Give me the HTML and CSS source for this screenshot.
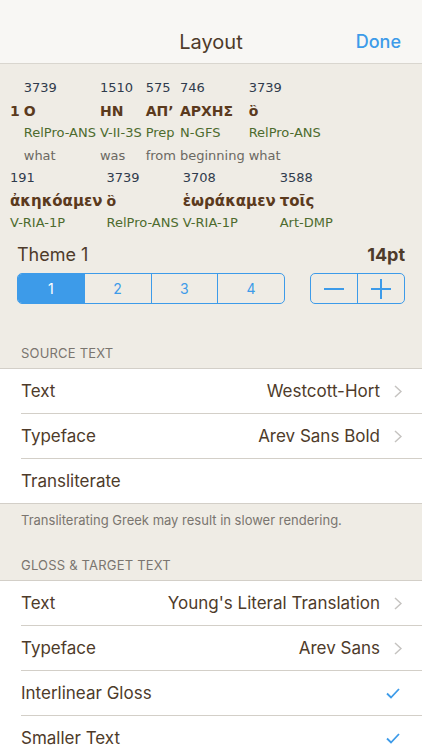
FILE: index.html
```html
<!DOCTYPE html>
<html>
<head>
<meta charset="utf-8">
<link rel="stylesheet" href="styles.css">
</head>
<body>
<div class="nav">
  <span class="nav-title">Layout</span>
  <span class="nav-done">Done</span>
</div>

<div class="preview">
  <div class="verse">
    <div class="word vnum"><span class="num">&nbsp;</span><span class="gk">1</span></div>
    <div class="word"><span class="num">3739</span><span class="gk">O</span><span class="morph">RelPro-ANS</span><span class="gloss">what</span></div>
    <div class="word"><span class="num">1510</span><span class="gk">HN</span><span class="morph">V-II-3S</span><span class="gloss">was</span></div>
    <div class="word"><span class="num">575</span><span class="gk">ΑΠ’</span><span class="morph">Prep</span><span class="gloss">from</span></div>
    <div class="word"><span class="num">746</span><span class="gk">ΑΡΧΗΣ</span><span class="morph">N-GFS</span><span class="gloss">beginning</span></div>
    <div class="word"><span class="num">3739</span><span class="gk">ὃ</span><span class="morph">RelPro-ANS</span><span class="gloss">what</span></div>
  </div>
  <div class="verse">
    <div class="word"><span class="num">191</span><span class="gk lc">ἀκηκόαμεν</span><span class="morph">V-RIA-1P</span></div>
    <div class="word"><span class="num">3739</span><span class="gk">ὃ</span><span class="morph">RelPro-ANS</span></div>
    <div class="word"><span class="num">3708</span><span class="gk lc">ἑωράκαμεν</span><span class="morph">V-RIA-1P</span></div>
    <div class="word"><span class="num">3588</span><span class="gk lc">τοῖς</span><span class="morph">Art-DMP</span></div>
  </div>
</div>

<div class="theme">
  <div class="theme-head">
    <span class="theme-name">Theme 1</span>
    <span class="theme-size">14pt</span>
  </div>
  <div class="theme-controls">
    <div class="segmented">
      <div class="seg active">1</div>
      <div class="seg">2</div>
      <div class="seg">3</div>
      <div class="seg">4</div>
    </div>
    <div class="stepper">
      <div class="step"><span class="minus"></span></div>
      <div class="step"><span class="plus"></span></div>
    </div>
  </div>
</div>

<div class="section-header">SOURCE TEXT</div>
<div class="group">
  <div class="cell">
    <span class="cell-label">Text</span>
    <span class="cell-value">Westcott-Hort</span>
    <svg class="chev" viewBox="0 0 8 13" width="8" height="13"><path d="M1 1l6 5.5L1 12" fill="none" stroke="#c5c3c0" stroke-width="1.5"/></svg>
  </div>
  <div class="cell">
    <span class="cell-label">Typeface</span>
    <span class="cell-value">Arev Sans Bold</span>
    <svg class="chev" viewBox="0 0 8 13" width="8" height="13"><path d="M1 1l6 5.5L1 12" fill="none" stroke="#c5c3c0" stroke-width="1.5"/></svg>
  </div>
  <div class="cell">
    <span class="cell-label">Transliterate</span>
  </div>
</div>
<div class="section-footer">Transliterating Greek may result in slower rendering.</div>

<div class="section-header">GLOSS &amp; TARGET TEXT</div>
<div class="group">
  <div class="cell">
    <span class="cell-label">Text</span>
    <span class="cell-value">Young's Literal Translation</span>
    <svg class="chev" viewBox="0 0 8 13" width="8" height="13"><path d="M1 1l6 5.5L1 12" fill="none" stroke="#c5c3c0" stroke-width="1.5"/></svg>
  </div>
  <div class="cell">
    <span class="cell-label">Typeface</span>
    <span class="cell-value">Arev Sans</span>
    <svg class="chev" viewBox="0 0 8 13" width="8" height="13"><path d="M1 1l6 5.5L1 12" fill="none" stroke="#c5c3c0" stroke-width="1.5"/></svg>
  </div>
  <div class="cell">
    <span class="cell-label">Interlinear Gloss</span>
    <svg class="check" viewBox="0 0 14 11" width="14" height="11"><path d="M1 5.5l4 4L13 1" fill="none" stroke="#3d9be9" stroke-width="1.8"/></svg>
  </div>
  <div class="cell">
    <span class="cell-label">Smaller Text</span>
    <svg class="check" viewBox="0 0 14 11" width="14" height="11"><path d="M1 5.5l4 4L13 1" fill="none" stroke="#3d9be9" stroke-width="1.8"/></svg>
  </div>
</div>
</body>
</html>
```

FILE: styles.css
```css
html, body {
  margin: 0;
  padding: 0;
}
body {
  width: 422px;
  height: 750px;
  overflow: hidden;
  background: #efece5;
  font-family: "Inter", "Liberation Sans", sans-serif;
  color: #4e3b2a;
}

.nav {
  height: 64px;
  box-sizing: border-box;
  padding-top: 20px;
  background: #f8f7f4;
  border-bottom: 1px solid #d9d6cf;
  display: flex;
  align-items: center;
  justify-content: center;
  position: relative;
}
.nav-title {
  font-size: 20px;
  color: #4e3b2a;
}
.nav-done {
  position: absolute;
  right: 21px;
  top: 31px;
  font-size: 18px;
  font-weight: 500;
  color: #3d9be9;
}

.preview {
  height: 169px;
  box-sizing: border-box;
  padding: 13px 0 0 10px;
  overflow: hidden;
  font-family: "DejaVu Sans", sans-serif;
}
.verse {
  display: flex;
  gap: 4px;
}
.word {
  display: flex;
  flex-direction: column;
  white-space: nowrap;
}
.word span {
  line-height: 22.5px;
  height: 22.5px;
}
.num {
  font-size: 13px;
  color: #2f3b4c;
}
.gk {
  font-size: 14px;
  font-weight: bold;
  color: #5b3a1d;
}
.gk.lc {
  font-size: 15px;
}
.morph {
  font-size: 13px;
  color: #4d6b2e;
}
.gloss {
  font-size: 13px;
  color: #6b6862;
}

.theme {
  padding: 8px 17px 0 17px;
}
.theme-head {
  display: flex;
  justify-content: space-between;
  align-items: center;
  height: 26px;
}
.theme-name {
  font-size: 18px;
  color: #4e3b2a;
}
.theme-size {
  font-size: 18px;
  font-weight: 700;
  color: #4e3b2a;
}
.theme-controls {
  margin-top: 6px;
  display: flex;
  justify-content: space-between;
}
.segmented {
  display: flex;
  width: 268px;
  height: 31px;
  box-sizing: border-box;
  border: 1px solid #3d9be9;
  border-radius: 5px;
  overflow: hidden;
}
.seg {
  flex: 1;
  display: flex;
  align-items: center;
  justify-content: center;
  font-size: 14px;
  color: #3d9be9;
  border-left: 1px solid #3d9be9;
}
.seg:first-child {
  border-left: none;
}
.seg.active {
  background: #3d9be9;
  color: #ffffff;
}
.stepper {
  display: flex;
  width: 95px;
  height: 31px;
  box-sizing: border-box;
  border: 1px solid #3d9be9;
  border-radius: 5px;
}
.step {
  flex: 1;
  display: flex;
  align-items: center;
  justify-content: center;
  position: relative;
}
.step + .step {
  border-left: 1px solid #3d9be9;
}
.minus, .plus {
  display: block;
  width: 20px;
  height: 2px;
  background: #3d9be9;
  position: relative;
}
.plus::after {
  content: "";
  position: absolute;
  left: 9px;
  top: -9px;
  width: 2px;
  height: 20px;
  background: #3d9be9;
}

.section-header {
  padding: 41px 21px 7px 21px;
  font-size: 13px;
  color: #7a756f;
  letter-spacing: 0.2px;
}
.group {
  background: #ffffff;
  border-top: 1px solid #d3cfc8;
  border-bottom: 1px solid #d3cfc8;
}
.cell {
  display: flex;
  align-items: center;
  height: 44px;
  margin-left: 21px;
  padding-right: 20px;
  border-bottom: 1px solid #d3cfc8;
}
.cell:last-child {
  border-bottom: none;
}
.cell-label {
  flex: 1;
  font-size: 17px;
  color: #4e3b2a;
}
.cell-value {
  font-size: 17px;
  color: #4e3b2a;
  margin-right: 14px;
}
.chev {
  display: block;
}
.check {
  display: block;
  margin-right: 2px;
}
.section-footer {
  padding: 8px 21px 0 21px;
  font-size: 13px;
  color: #7a756f;
}
.section-footer + .section-header {
  padding-top: 29px;
}
```
